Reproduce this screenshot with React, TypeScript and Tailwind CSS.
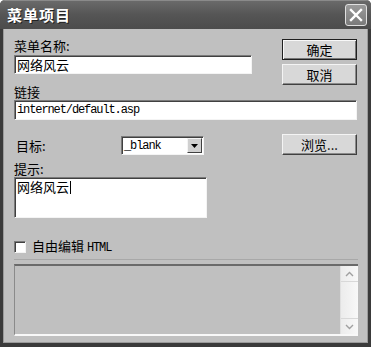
const cjk = "font-['SimSun','Noto_Sans_CJK_SC',sans-serif]";
const mono = "font-['Liberation_Mono',monospace] text-[12px] tracking-[-1.1px]";

const sunken =
  "border border-t-[#7a7a7a] border-l-[#7a7a7a] border-b-[#f4f4f4] border-r-[#f4f4f4] shadow-[inset_1px_1px_0_#404040]";

const Button = ({ label, isDefault }: { label: string; isDefault?: boolean }) => (
  <div
    className={`flex h-[21px] w-[75px] items-center justify-center bg-[#d8d8d8] text-[13px] leading-none text-black ${
      isDefault
        ? "border border-[#202020] shadow-[inset_1px_1px_0_#f8f8f8,inset_-1px_-1px_0_#777]"
        : "border border-t-[#f4f4f4] border-l-[#f4f4f4] border-b-[#404040] border-r-[#404040] shadow-[inset_-1px_-1px_0_#8a8a8a]"
    }`}
  >
    {label}
  </div>
);

export default function App() {
  return (
    <div className={`flex h-[347px] w-[371px] flex-col overflow-hidden rounded-t-[5px] bg-[#3a3a3a] ${cjk}`}>
      {/* title bar */}
      <div className="flex h-[29px] shrink-0 items-center justify-between border-t border-[#8a8a8a] bg-gradient-to-b from-[#6a6a6a] via-[#555] to-[#4c4c4c] pl-[7px] pr-[4px]">
        <span className="text-[15px] font-bold tracking-[1px] text-white [text-shadow:1px_1px_0_#222]">菜单项目</span>
        <div className="flex h-[22px] w-[22px] items-center justify-center rounded-[3px] border border-[#e0e0e0] bg-gradient-to-b from-[#9a9a9a] to-[#7a7a7a]">
          <svg width="14" height="14" viewBox="0 0 14 14">
            <path d="M2 2 L12 12 M12 2 L2 12" stroke="#fff" strokeWidth="2.4" strokeLinecap="square" />
          </svg>
        </div>
      </div>

      {/* body */}
      <div className="mx-[3px] mb-[4px] flex flex-1 flex-col border-x border-b border-[#9a9a9a] bg-[#c0c0c0] pl-[10px] pr-[10px] text-[13px] leading-[16px] text-black">
        <div className="mt-[10px] flex justify-between">
          <div className="flex w-[238px] flex-col">
            <div className="h-[16px] leading-[14px]">菜单名称:</div>
            <div className={`h-[19px] bg-white pl-[2px] leading-[17px] ${sunken}`}>网络风云</div>
          </div>
          <div className="flex flex-col gap-[4px]">
            <Button label="确定" isDefault />
            <Button label="取消" />
          </div>
        </div>

        <div className="-mt-[1px] h-[16px]">链接</div>
        <div className={`h-[20px] w-[343px] bg-white pl-[2px] leading-[18px] ${mono} ${sunken}`}>
          internet/default.asp
        </div>

        <div className="mt-[16px] flex items-center">
          <div className="w-[107px] pl-[2px]">目标:</div>
          <div className={`flex h-[19px] w-[83px] items-center justify-between bg-white pl-[2px] pr-[1px] ${sunken}`}>
            <span className={`leading-none ${mono}`}>_blank</span>
            <div className="flex h-[15px] w-[15px] items-center justify-center border border-t-[#f4f4f4] border-l-[#f4f4f4] border-b-[#404040] border-r-[#404040] bg-[#d0d0d0]">
              <svg width="7" height="4" viewBox="0 0 7 4">
                <path d="M0 0 H7 L3.5 4 Z" fill="#000" />
              </svg>
            </div>
          </div>
          <div className="ml-auto -mt-[3px]">
            <Button label="浏览..." />
          </div>
        </div>

        <div className="mt-[6px] h-[16px]">提示:</div>
        <div className={`h-[41px] w-[193px] bg-white pl-[2px] pt-[1px] ${sunken}`}>
          网络风云<span className="ml-[1px] inline-block h-[13px] w-px translate-y-[2px] bg-black" />
        </div>

        <div className="mt-[20px] flex items-center gap-[6px]">
          <div className={`h-[12px] w-[12px] bg-white ${sunken}`} />
          <span>
            自由编辑 <span className={mono}>HTML</span>
          </span>
        </div>

        <div className="mt-[3px] h-[3px] w-[344px] border-t border-[#a8a8a8]" />
        <div className="mt-[2px] flex h-[72px] w-[344px] border-t-2 border-l border-t-[#6a6a6a] border-l-[#8a8a8a] border-b-2 border-b-[#f8f8f8]">
          <div className="flex-1" />
          <div className="flex w-[18px] flex-col justify-between border-l border-[#e0e0e0] bg-gradient-to-r from-[#ececec] to-[#f8f8f8]">
            <div className="flex h-[16px] items-center justify-center border-b border-[#d8d8d8]">
              <svg width="9" height="6" viewBox="0 0 9 6">
                <path d="M1 5 L4.5 1.5 L8 5" stroke="#a0a0a0" strokeWidth="1.4" fill="none" />
              </svg>
            </div>
            <div className="flex h-[16px] items-center justify-center border-t border-[#d8d8d8]">
              <svg width="9" height="6" viewBox="0 0 9 6">
                <path d="M1 1 L4.5 4.5 L8 1" stroke="#a0a0a0" strokeWidth="1.4" fill="none" />
              </svg>
            </div>
          </div>
        </div>
      </div>
    </div>
  );
}
